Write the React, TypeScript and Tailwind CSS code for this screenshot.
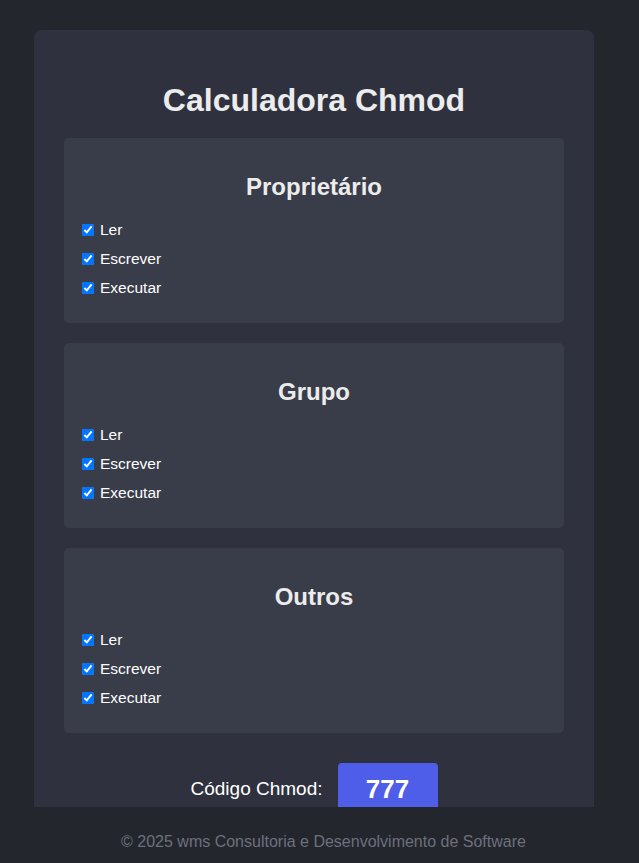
import { FC, useState } from "react";

type Perm = "ler" | "escrever" | "executar";

const labels: { key: Perm; label: string; value: number }[] = [
  { key: "ler", label: "Ler", value: 4 },
  { key: "escrever", label: "Escrever", value: 2 },
  { key: "executar", label: "Executar", value: 1 },
];

interface GroupProps {
  title: string;
  perms: Record<Perm, boolean>;
  onToggle: (p: Perm) => void;
}

const PermGroup: FC<GroupProps> = ({ title, perms, onToggle }) => {
  return (
    <div className="rounded-[5px] bg-[#393c49] px-[18px] pt-[15px] pb-[15px]">
      <h2 className="mt-[20px] mb-[20px] text-center text-[24px] font-bold leading-[28px] text-[#ececec]">
        {title}
      </h2>
      {labels.map((l) => (
        <label
          key={l.key}
          className="mb-[11px] flex h-[18px] items-center text-[15.5px] text-white"
        >
          <input
            type="checkbox"
            className="mr-[6px] h-[12px] w-[12px]"
            checked={perms[l.key]}
            onChange={() => onToggle(l.key)}
          />
          {l.label}
        </label>
      ))}
    </div>
  );
};

const all = { ler: true, escrever: true, executar: true };

export default function App() {
  const [groups, setGroups] = useState<Record<string, Record<Perm, boolean>>>({
    owner: { ...all },
    group: { ...all },
    others: { ...all },
  });

  const toggle = (g: string) => (p: Perm) =>
    setGroups((prev) => ({ ...prev, [g]: { ...prev[g], [p]: !prev[g][p] } }));

  const digit = (g: string) =>
    labels.reduce((acc, l) => acc + (groups[g][l.key] ? l.value : 0), 0);

  const code = `${digit("owner")}${digit("group")}${digit("others")}`;

  return (
    <div
      className="flex h-screen flex-col bg-[#24262e]"
      style={{ fontFamily: '"Liberation Sans", Arial, sans-serif' }}
    >
      <main className="flex-1 overflow-hidden px-[34px] pt-[30px]">
        <div className="w-[560px] rounded-[8px] bg-[#2f323e] px-[30px] pt-[30px] pb-[30px]">
          <h1 className="mt-[21px] mb-[19px] text-center text-[32px] font-bold leading-[38px] text-[#ececec]">
            Calculadora Chmod
          </h1>
          <div className="flex flex-col gap-[20px]">
            <PermGroup title="Proprietário" perms={groups.owner} onToggle={toggle("owner")} />
            <PermGroup title="Grupo" perms={groups.group} onToggle={toggle("group")} />
            <PermGroup title="Outros" perms={groups.others} onToggle={toggle("others")} />
          </div>
          <div className="mt-[30px] flex items-center justify-center gap-[15px]">
            <span className="text-[19px] text-white">Código Chmod:</span>
            <span className="flex h-[52px] w-[100px] items-center justify-center rounded-[4px] bg-[#4f5ee9] text-[26px] font-bold text-white">
              {code}
            </span>
          </div>
        </div>
      </main>
      <footer className="flex h-[56px] shrink-0 items-center justify-center bg-[#24262e] pt-[14px] pl-[8px] text-[16px] text-[#6c707c]">
        © 2025 wms Consultoria e Desenvolvimento de Software
      </footer>
    </div>
  );
}
